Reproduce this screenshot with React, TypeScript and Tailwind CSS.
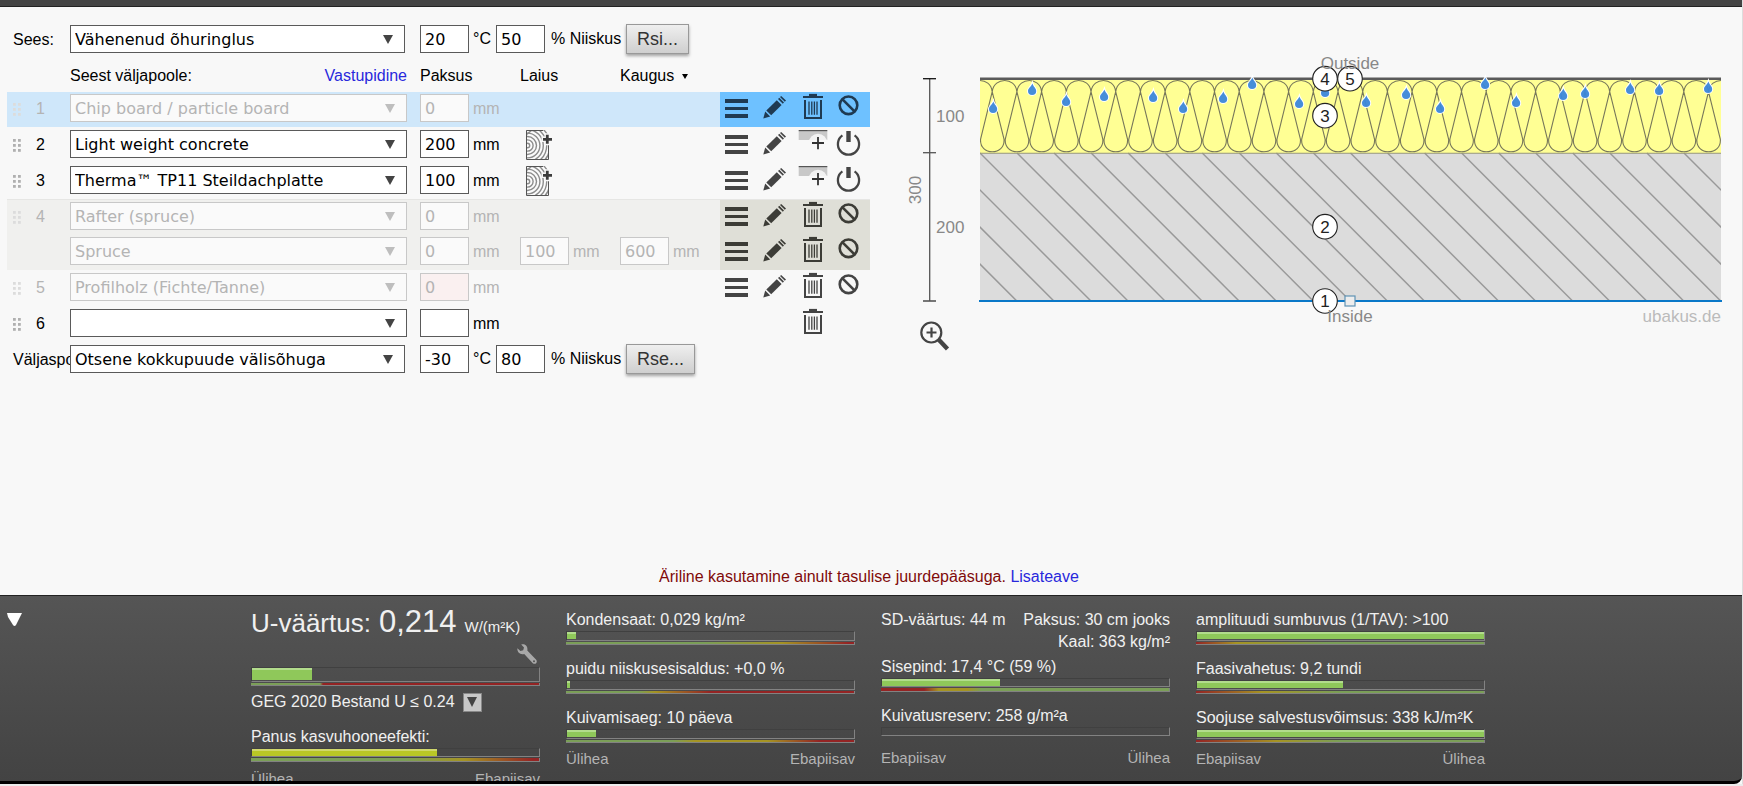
import React, { useState } from 'react';

interface Layer {
  index?: number;
  name: string;
  thickness: string;
  width?: string;
  spacing?: string;
  off?: boolean;
  error?: boolean;
  wood?: boolean;
  tools: 'inactive' | 'active' | 'new';
}

interface Meter {
  label: string;
  value: number;
  scale?: string;
  thick?: boolean;
}

const MATERIALS = [
  '',
  'Chip board / particle board',
  'Light weight concrete',
  'Therma™ TP11 Steildachplatte',
  'Rafter (spruce)',
  'Spruce',
  'Profilholz (Fichte/Tanne)',
];

const FIELD = 'h-7 border pl-1 font-["DejaVu_Sans",Verdana,sans-serif] text-base outline-none';
const FIELD_ON = 'border-[#5a5a5a] bg-white text-black';
const FIELD_OFF = 'border-[#c8c8c8] bg-[#fafafa] text-[#b4b4b4]';
const FIELD_ERROR = 'border-[#c8c8c8] bg-[#faf0f0] text-[#b4b4b4]';

const layers: Layer[][] = [
  [{ index: 1, name: 'Chip board / particle board', thickness: '0', off: true, tools: 'inactive' }],
  [{ index: 2, name: 'Light weight concrete', thickness: '200', wood: true, tools: 'active' }],
  [{ index: 3, name: 'Therma™ TP11 Steildachplatte', thickness: '100', wood: true, tools: 'active' }],
  [
    { index: 4, name: 'Rafter (spruce)', thickness: '0', off: true, tools: 'inactive' },
    { name: 'Spruce', thickness: '0', width: '100', spacing: '600', off: true, tools: 'inactive' },
  ],
  [{ index: 5, name: 'Profilholz (Fichte/Tanne)', thickness: '0', off: true, error: true, tools: 'inactive' }],
  [{ index: 6, name: '', thickness: '', tools: 'new' }],
];

/* ---------- icons ---------- */

const MenuIcon = () => (
  <svg width="37" height="34" viewBox="0 0 37 34" fill="currentColor">
    <rect x="5" y="7" width="23" height="4" />
    <rect x="5" y="15" width="23" height="3" />
    <rect x="5" y="22" width="23" height="4" />
  </svg>
);

const PencilIcon = () => (
  <svg width="37" height="34" viewBox="0 0 37 34" fill="currentColor">
    <path d="M6.3 26.4 L8.2 19.6 L13.2 24.5 Z" />
    <path d="M9.3 18.4 L19.8 8.2 L24.6 12.9 L14.2 23.3 Z" />
    <path d="M21 7 L22.3 5.7 L27 10.4 L25.8 11.7 Z" />
    <path d="M23 5 L24.2 3.9 L29 8.5 L27.8 9.7 Z" />
  </svg>
);

const TrashIcon = () => (
  <svg width="37" height="34" viewBox="0 0 37 34" fill="none" stroke="currentColor">
    <path d="M9 5 H29" strokeWidth="2" />
    <path d="M15 3 H23" strokeWidth="2.2" />
    <path d="M11 8 V26 H27 V8" strokeWidth="2" />
    <path d="M15 9.5 V22.7 M17.8 9.5 V22.7 M20.4 9.5 V22.7 M23 9.5 V22.7" strokeWidth="1.3" />
  </svg>
);

const BanIcon = () => (
  <svg width="37" height="34" viewBox="0 0 37 34" fill="none" stroke="currentColor" strokeWidth="2.6">
    <circle cx="17.5" cy="13.3" r="8.8" />
    <path d="M11.5 7.3 L23.5 19.3" />
  </svg>
);

const PowerIcon = () => (
  <svg width="37" height="34" viewBox="0 0 37 34" fill="none" stroke="currentColor">
    <path d="M11.4 7.4 A10.6 10.6 0 1 0 23.6 7.4" strokeWidth="2.3" />
    <path d="M17.5 3 V14" strokeWidth="4.4" />
  </svg>
);

const AddLayerIcon = () => (
  <svg width="37" height="34" viewBox="0 0 37 34">
    <rect x="4.7" y="2.5" width="28.6" height="9.5" fill="#c8c8c8" />
    <rect x="4.7" y="2" width="28.6" height="1.2" fill="#555" />
    <circle cx="24" cy="15" r="9.3" fill="#f2f2f2" />
    <rect x="4.7" y="12" width="29" height="13" fill="#f8f8f8" />
    <path d="M18 15 H30 M24 9 V21.3" stroke="#333" strokeWidth="1.8" />
  </svg>
);

const WoodIcon = () => (
  <svg width="27" height="30" viewBox="0 0 27 30" fill="none">
    <rect width="23" height="30" fill="#fbfbfb" />
    <svg width="23" height="30" viewBox="0 0 23 30" stroke="#8c8c8c" strokeWidth="1.4">
      {[2.2, 5.6, 9, 12.4, 15.8, 19.2, 22.6].map((r) => (
        <circle key={r} cx="1.5" cy="15.5" r={r} />
      ))}
      <path d="M0 5 L6 0" />
    </svg>
    <path d="M22.5 15 V29.5 H0.5 V0.5 H17" stroke="#555" />
    <path d="M15.5 9.3 H27 M21.3 3.3 V15.3" stroke="#f8f8f8" strokeWidth="5.4" />
    <path d="M17 9.3 H26 M21.3 4.8 V13.8" stroke="#3c3c3c" strokeWidth="2.8" />
  </svg>
);

const DragDots = ({ dim }: { dim?: boolean }) => (
  <svg width="8" height="13" viewBox="0 0 8 13" fill={dim ? '#dcdcdc' : '#b0b0b0'}>
    {[0, 5, 10].map((y) => (
      <g key={y}>
        <rect x="0" y={y} width="2.8" height="2.8" />
        <rect x="5" y={y} width="2.8" height="2.8" />
      </g>
    ))}
  </svg>
);

const ZoomIcon = () => (
  <svg width="30" height="30" viewBox="0 0 30 30" fill="none" stroke="#444">
    <circle cx="11.3" cy="11.5" r="10" strokeWidth="2.2" />
    <path d="M6.5 11.5 H16.5 M11.5 6.5 V16.5" strokeWidth="2.2" />
    <path d="M18.8 18.8 L27.5 28" strokeWidth="4.4" />
  </svg>
);

const WrenchIcon = () => (
  <svg width="20" height="20" viewBox="0 0 20 20">
    <path
      d="M4.2 0.6 C7.6 -0.6 11.2 2 10.3 6.6 L19.2 15.8 C21 18.4 18.2 21 15.8 19.2 L7.2 10 C3.4 11.2 -0.2 8.4 0.4 4.2 L3.4 7 L6.2 6.2 L7 3.4 Z"
      fill="#a8a8a8"
    />
    <circle cx="17" cy="17.2" r="1" fill="#555" />
  </svg>
);

/* ---------- form parts ---------- */

interface PickerProps {
  label: string;
  value: string;
  options: string[];
  off?: boolean;
  className: string;
}

const Picker = ({ label, value, options, off, className }: PickerProps) => {
  const [current, setCurrent] = useState(value);
  return (
    <div className={`relative ${className}`}>
      <select
        aria-label={label}
        value={current}
        onChange={(e) => setCurrent(e.target.value)}
        className={`block w-full appearance-none pt-px ${FIELD} ${off ? FIELD_OFF : FIELD_ON}`}
      >
        {options.map((o) => (
          <option key={o}>{o}</option>
        ))}
      </select>
      <svg
        className="pointer-events-none absolute right-3 top-[10px]"
        width="10"
        height="9"
        viewBox="0 0 10 9"
        fill={off ? '#bebebe' : '#444'}
      >
        <path d="M0 0 H10 L5 9 Z" />
      </svg>
    </div>
  );
};

interface NumberFieldProps {
  label: string;
  value: string;
  off?: boolean;
  error?: boolean;
}

const NumberField = ({ label, value, off, error }: NumberFieldProps) => (
  <input
    aria-label={label}
    defaultValue={value}
    className={`w-[49px] pt-px ${FIELD} ${error ? FIELD_ERROR : off ? FIELD_OFF : FIELD_ON}`}
  />
);

const Measure = (props: NumberFieldProps) => (
  <div className="flex w-[100px] items-center gap-1">
    <NumberField {...props} />
    <span className={`pt-[2px] ${props.off ? 'text-[#b4b4b4]' : 'text-black'}`}>mm</span>
  </div>
);

const Tool = ({ label, children }: { label: string; children: React.ReactNode }) => (
  <button type="button" aria-label={label} className="h-[34px] w-[37px]">
    {children}
  </button>
);

const Tools = ({ kind }: { kind: Layer['tools'] }) => {
  if (kind === 'new') {
    return (
      <div className="flex pl-[74px]">
        <Tool label="Delete"><TrashIcon /></Tool>
      </div>
    );
  }
  return (
    <div className="flex">
      <Tool label="Menu"><MenuIcon /></Tool>
      <Tool label="Edit"><PencilIcon /></Tool>
      {kind === 'inactive' ? (
        <>
          <Tool label="Delete"><TrashIcon /></Tool>
          <Tool label="Enable"><BanIcon /></Tool>
        </>
      ) : (
        <>
          <Tool label="Add layer"><AddLayerIcon /></Tool>
          <Tool label="Disable"><PowerIcon /></Tool>
        </>
      )}
    </div>
  );
};

const LayerRow = ({ layer, toolTint }: { layer: Layer; toolTint: string }) => {
  const { index, name, thickness, width, spacing, off, error, wood, tools } = layer;
  return (
    <div className="flex h-[35px]">
      <div className="flex grow items-start pt-[2px]">
        <div className="flex h-7 w-[63px] items-center gap-[15px] pl-[6px] pt-[2px]">
          {index && (
            <>
              <DragDots dim={off} />
              <span className={off ? 'text-[#b4b4b4]' : 'text-black'}>{index}</span>
            </>
          )}
        </div>
        <div className="w-[350px]">
          <Picker label="Material" value={name} options={MATERIALS} off={off} className="w-[337px]" />
        </div>
        <Measure label="Paksus" value={thickness} off={off} error={error} />
        {wood && (
          <button type="button" aria-label="Add wood" className="pl-[6px]">
            <WoodIcon />
          </button>
        )}
        {width && <Measure label="Laius" value={width} off={off} />}
        {spacing && <Measure label="Kaugus" value={spacing} off={off} />}
      </div>
      <div className={`w-[150px] ${toolTint}`}>
        <Tools kind={tools} />
      </div>
    </div>
  );
};

interface ClimateProps {
  side: string;
  surface: string;
  temperature: string;
  humidity: string;
  action: string;
}

const ClimateRow = ({ side, surface, temperature, humidity, action }: ClimateProps) => (
  <div className="flex h-7 items-center">
    <div className="w-[63px] overflow-hidden whitespace-nowrap pl-[6px] pt-[2px]">{side}</div>
    <div className="w-[350px]">
      <Picker label={side} value={surface} options={[surface]} className="w-[335px]" />
    </div>
    <NumberField label="Temperatuur" value={temperature} />
    <span className="w-[27px] pl-1">°C</span>
    <NumberField label="Niiskus" value={humidity} />
    <span className="w-[81px] whitespace-nowrap pl-[6px]">% Niiskus</span>
    <button
      type="button"
      className="h-[30px] border border-[#999] bg-linear-to-b from-[#efefef] to-[#cfcfcf] px-[10px] text-lg leading-6 text-[#333] shadow-[0_2px_3px_rgba(0,0,0,0.35)]"
    >
      {action}
    </button>
  </div>
);

/* ---------- cross section ---------- */

const LEFT = 80;
const RIGHT = 821;
const STEP = 24.7;

const drops = [
  [93, 100], [132, 82], [166, 93], [204, 88], [253, 89], [283, 100], [323, 90], [352, 76], [399, 95],
  [425, 84], [466, 94], [506, 86], [540, 100], [585, 76], [616, 94], [663, 87], [685, 85], [730, 81],
  [759, 82], [808, 80],
];

const markers = [
  { n: 4, x: 425, y: 71.7 },
  { n: 5, x: 450, y: 71.7 },
  { n: 3, x: 425, y: 108.7 },
  { n: 2, x: 425, y: 219.7 },
  { n: 1, x: 425, y: 294 },
];

// Continuous loop of mineral wool: bulb at the top, bulb at the bottom, next bulb at the top.
const woolPath = () => {
  let d = `M${LEFT - 12} 84`;
  for (let i = 0; i <= 30; i++) {
    const c = LEFT + i * STEP;
    d += ` C${c - 10.5} 70 ${c + 10.5} 70 ${c + 12} 84 L${c + 24} 132`;
    d += ` C${c + 25.5} 149 ${c - 1} 149 ${c + 0.6} 132 L${c + 12.4} 84`;
  }
  return d;
};

const CrossSection = () => (
  <svg viewBox="0 0 842 350" className="block w-full font-['Liberation_Sans',Arial,sans-serif]" fontSize="17">
    <defs>
      <clipPath id="section">
        <rect x={LEFT} y="71" width={RIGHT - LEFT} height="223" />
      </clipPath>
    </defs>

    <g stroke="#555" strokeWidth="1.3">
      <path d="M29.7 71.7 V294" />
      <path d="M23 71.7 H36" stroke="#111" />
      <path d="M23 145.7 H36" />
      <path d="M23 294 H36" strokeWidth="1.6" />
    </g>
    <g fill="#888">
      <text x="36" y="115">100</text>
      <text x="36" y="226">200</text>
      <text transform="translate(21 183) rotate(-90)" textAnchor="middle">300</text>
    </g>

    <rect x={LEFT} y="72" width={RIGHT - LEFT} height="74" fill="#ffff94" />
    <rect x={LEFT} y="146" width={RIGHT - LEFT} height="148" fill="#dcdcdc" />
    <g clipPath="url(#section)" fill="none">
      <g stroke="#999" strokeWidth="1.5">
        {Array.from({ length: 24 }, (_, i) => LEFT + (i - 4) * 37.05).map((x) => (
          <path key={x} d={`M${x} 146 l148.2 148.2`} />
        ))}
      </g>
      <path d={woolPath()} stroke="#77775a" strokeWidth="1.1" />
    </g>
    <path d={`M${LEFT} 146.2 H${RIGHT}`} stroke="#999978" strokeWidth="1.1" />
    <path d={`M${LEFT} 71.7 H${RIGHT}`} stroke="#5a5a5a" strokeWidth="2.4" />
    <path d={`M${LEFT - 1} 294 H${RIGHT + 1}`} stroke="#0a78c8" strokeWidth="2" />

    {drops.map(([x, y]) => (
      <path
        key={x}
        transform={`translate(${x} ${y})`}
        d="M0.4 -5.6 C1.2 -2.6 4.2 -0.9 4.2 2 A4.1 4.1 0 0 1 -4 2 C-4 -0.9 -0.6 -2.6 0.4 -5.6 Z"
        fill="#3a86dc"
        fillOpacity="0.94"
        stroke="#fff"
        strokeWidth="2"
        paintOrder="stroke"
      />
    ))}

    <rect x="445" y="289" width="10" height="10" fill="#ededed" stroke="#5f93b5" strokeWidth="1.2" />
    {markers.map(({ n, x, y }) => (
      <g key={n}>
        <circle cx={x} cy={y} r="12.3" fill="#fff" stroke="#222" strokeWidth="1.1" />
        <text x={x} y={y + 6} textAnchor="middle" fill="#222">{n}</text>
      </g>
    ))}
    <text x="450" y="62" textAnchor="middle" fill="#888">Outside</text>
    <text x="450" y="315" textAnchor="middle" fill="#888">Inside</text>
    <text x={RIGHT} y="315" textAnchor="end" fill="#bbb">ubakus.de</text>
  </svg>
);

/* ---------- results ---------- */

const G = '#7b9f58';
const Y = '#a59424';
const R = '#942424';

const Bar = ({ value, scale, thick, tall, yellow }: Omit<Meter, 'label'> & { tall?: boolean; yellow?: boolean }) => (
  <div>
    <div
      className={`border border-b-[#828282] border-l-[#404040] border-r-[#828282] border-t-[#404040] ${
        tall ? 'h-[15px]' : thick ? 'h-[9px]' : 'h-[10px]'
      }`}
    >
      <div
        className={`border-t-2 ${tall ? 'h-3' : 'h-[7px]'} ${
          yellow ? 'border-[#d0d76c] bg-[#b9c726]' : 'border-[#b2dc8c] bg-[#8fc85a]'
        } ${value === 0 ? 'hidden' : ''}`}
        style={{ width: `${value}%` }}
      />
    </div>
    {scale && (
      <div className={`mt-px border-b border-r border-[#828282] ${thick ? 'h-1' : 'h-[3px]'}`}>
        <div className="h-full" style={{ background: `linear-gradient(90deg, ${scale})` }} />
      </div>
    )}
  </div>
);

const MeterBlock = ({ label, ...bar }: Meter) => (
  <div className="mb-[15px] flex flex-col gap-[2px]">
    <span className="whitespace-nowrap leading-[18px]">{label}</span>
    <Bar {...bar} />
  </div>
);

const Legend = ({ from, to }: { from: string; to: string }) => (
  <div className="flex justify-between text-[15px] leading-[18px] text-[#b4b4b4]">
    <span>{from}</span>
    <span>{to}</span>
  </div>
);

const moisture: Meter[] = [
  { label: 'Kondensaat: 0,029 kg/m²', value: 3, scale: `${G} 48%, ${Y} 75%, ${R} 98%` },
  { label: 'puidu niiskusesisaldus: +0,0 %', value: 1, scale: `${G} 25%, ${Y} 31%, ${R} 50%` },
  { label: 'Kuivamisaeg: 10 päeva', value: 10, scale: `${G} 37%, ${Y} 45%, ${Y} 70%, ${R} 88%` },
];

const heat: Meter[] = [
  { label: 'amplituudi sumbuvus (1/TAV): >100', value: 100, scale: `${R} 0%, ${Y} 14%, ${G} 45%` },
  { label: 'Faasivahetus: 9,2 tundi', value: 51, scale: `${R} 0%, ${Y} 23%, ${G} 50%` },
  { label: 'Soojuse salvestusvõimsus: 338 kJ/m²K', value: 100, scale: `${R} 0%, ${Y} 28%, ${G} 50%` },
];

const Results = () => (
  <section className="relative h-[189px] overflow-hidden rounded-br-lg border-b-[3px] border-t border-b-black border-t-[#222] bg-linear-to-b from-[#555] to-[#434343] text-[#f0f0f0]">
    <button type="button" aria-label="Collapse" className="absolute left-[7px] top-[17px]">
      <svg width="15" height="13" viewBox="0 0 15 13" fill="#fff">
        <path d="M0 0 H15 L9 12 Q7.5 14 6 12 L1 4 Z" />
      </svg>
    </button>
    <div className="flex justify-center gap-[26px] pr-[6px] pt-[15px]">
      <div className="w-[289px]">
        <div className="-mt-[5px] flex h-8 items-baseline gap-2 whitespace-nowrap leading-8">
          <span className="text-[26px]">U-väärtus:</span>
          <span className="text-[31px]">0,214</span>
          <span className="text-[15px]">W/(m²K)</span>
        </div>
        <div className="flex justify-end pr-[3px] pt-[6px]">
          <button type="button" aria-label="Settings"><WrenchIcon /></button>
        </div>
        <div className="mt-[3px]">
          <Bar value={21} scale={`${G} 24%, ${R} 25%`} tall />
        </div>
        <div className="mt-[6px] flex items-center gap-2 leading-5">
          <span>GEG 2020 Bestand U ≤ 0.24</span>
          <button
            type="button"
            aria-label="Standard"
            className="flex h-[19px] w-[19px] items-center justify-center border border-[#888] bg-[#c8c8c8]"
          >
            <svg width="10" height="10" viewBox="0 0 10 10" fill="#444">
              <path d="M0 0 H10 L5 10 Z" />
            </svg>
          </button>
        </div>
        <div className="mt-4 flex flex-col gap-[2px]">
          <span className="leading-[18px]">Panus kasvuhooneefekti:</span>
          <Bar value={64.5} scale={`${G} 53%, ${Y} 74%, ${R} 98%`} thick yellow />
        </div>
        <div className="mt-2">
          <Legend from="Ülihea" to="Ebapiisav" />
        </div>
      </div>

      <div className="w-[289px]">
        {moisture.map((m) => (
          <MeterBlock key={m.label} {...m} />
        ))}
        <div className="-mt-2">
          <Legend from="Ülihea" to="Ebapiisav" />
        </div>
      </div>

      <div className="w-[289px]">
        <div className="-mt-[2px] flex justify-between whitespace-nowrap leading-[22px]">
          <span>SD-väärtus: 44 m</span>
          <span className="text-right">Paksus: 30 cm jooks<br />Kaal: 363 kg/m²</span>
        </div>
        <div className="mt-[5px]">
          <MeterBlock label="Sisepind: 17,4 °C (59 %)" value={41} scale={`${R} 15%, ${Y} 20%, ${Y} 30%, ${G} 35%`} thick />
          <MeterBlock label="Kuivatusreserv: 258 g/m²a" value={0} thick />
        </div>
        <div className="-mt-[2px]">
          <Legend from="Ebapiisav" to="Ülihea" />
        </div>
      </div>

      <div className="w-[289px]">
        {heat.map((m) => (
          <MeterBlock key={m.label} {...m} />
        ))}
        <div className="-mt-2">
          <Legend from="Ebapiisav" to="Ülihea" />
        </div>
      </div>
    </div>
  </section>
);

const GROUP_TINT = [
  'mb-px bg-[#cfe7fa] text-[#1f3a52]',
  'mb-px text-[#444]',
  'text-[#444]',
  'mb-px border-t border-[#e6e6e4] bg-[#f0f0ee] text-[#3c3c36]',
  'mb-px text-[#444]',
  'text-[#444]',
];

const App = () => {
  return (
    <div className="min-h-screen bg-[#ececec] pb-[2px] font-['Liberation_Sans',Arial,sans-serif] text-base text-black">
      <div className="flex min-h-[calc(100vh-2px)] flex-col border-r border-[#ddd] bg-[#f8f8f8]">
        <div className="h-[7px] border-b border-[#222] bg-[#444]" />

        <main className="flex grow">
          <div className="w-[900px] shrink-0 pl-[7px] pt-[18px]">
            <div className="w-[863px]">
              <ClimateRow side="Sees:" surface="Vähenenud õhuringlus" temperature="20" humidity="50" action="Rsi..." />

              <div className="mt-[13px] flex h-[26px] pl-[63px] leading-5">
                <div className="w-[350px]">
                  <div className="flex w-[337px] justify-between">
                    <span>Seest väljapoole:</span>
                    <a href="#reverse" className="text-[#2828dc]">Vastupidine</a>
                  </div>
                </div>
                <span className="w-[100px]">Paksus</span>
                <span className="w-[100px]">Laius</span>
                <button type="button" className="flex h-5 items-center gap-2">
                  Kaugus
                  <svg width="6" height="5" viewBox="0 0 6 5"><path d="M0 0 H6 L3 5 Z" /></svg>
                </button>
              </div>

              <div className="flex flex-col">
                {layers.map((group, i) => (
                  <div key={i} className={GROUP_TINT[i]}>
                    {group.map((layer) => (
                      <LayerRow
                        key={layer.name}
                        layer={layer}
                        toolTint={i === 0 ? 'bg-[#6ec1ff]' : i === 3 ? 'bg-[#dfdfd7]' : ''}
                      />
                    ))}
                  </div>
                ))}
              </div>

              <div className="mt-[3px]">
                <ClimateRow side="Väljaspool:" surface="Otsene kokkupuude välisõhuga" temperature="-30" humidity="80" action="Rse..." />
              </div>
            </div>
          </div>

          <figure className="relative min-w-0 grow self-start">
            <CrossSection />
            <button type="button" aria-label="Zoom" className="absolute bottom-[6px] left-5">
              <ZoomIcon />
            </button>
          </figure>
        </main>

        <p className="pb-2 pr-1 text-center leading-5 text-[#800a0a]">
          Äriline kasutamine ainult tasulise juurdepääsuga.{' '}
          <a href="#more" className="text-[#2828dc]">Lisateave</a>
        </p>

        <Results />
      </div>
    </div>
  );
};

export default App;
